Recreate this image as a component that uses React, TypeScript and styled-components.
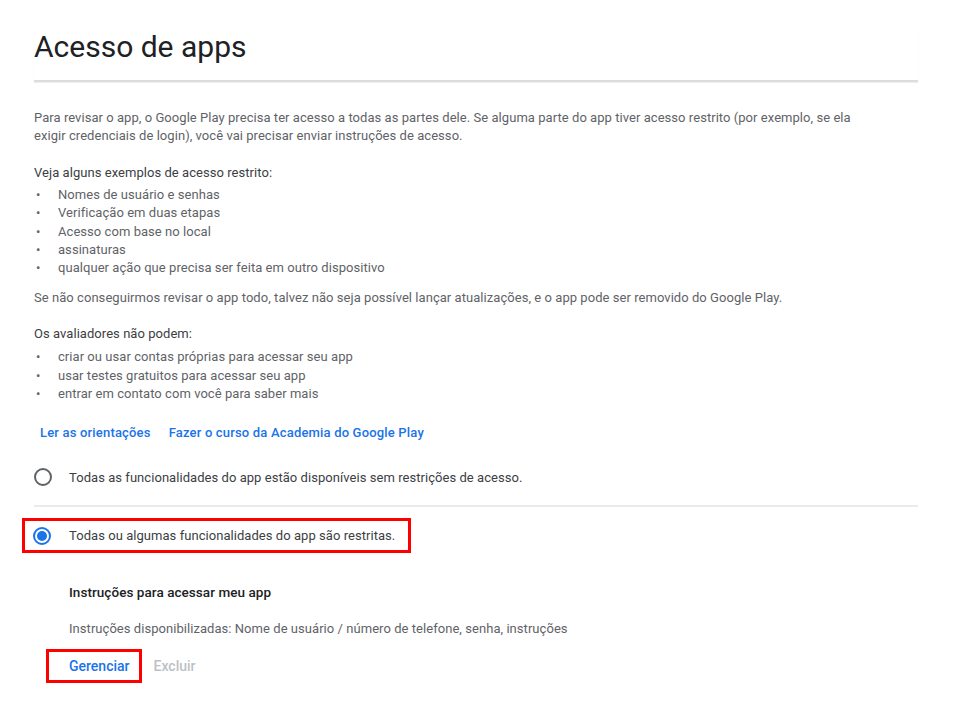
import React from "react";
import styled, { createGlobalStyle } from "styled-components";

const Global = createGlobalStyle`
  html, body { margin: 0; padding: 0; background: #fff; }
  body { font-family: Roboto, "Noto Sans", Arial, sans-serif; -webkit-font-smoothing: antialiased; }
`;

const Page = styled.div`
  width: 884px;
  padding: 28px 0 20px 34px;
  letter-spacing: 0.05px;
`;

const Title = styled.h1`
  margin: 0;
  font-size: 30px;
  line-height: 38px;
  font-weight: 400;
  letter-spacing: 0;
  color: #202124;
  padding-bottom: 14px;
  border-bottom: 2px solid #dadce0;
  box-shadow: 0 1px 1px rgba(0,0,0,0.06);
`;

const Para = styled.p<{ $dark?: boolean; $mt: number }>`
  max-width: 840px;
  margin: ${(p) => p.$mt}px 0 0;
  font-size: 13px;
  line-height: 18px;
  color: ${(p) => (p.$dark ? "#3c4043" : "#5f6368")};
`;

const List = styled.ul<{ $mt: number }>`
  list-style: none;
  margin: ${(p) => p.$mt}px 0 0;
  padding: 0;
`;

const Item = styled.li`
  position: relative;
  padding-left: 24px;
  font-size: 13px;
  line-height: 18.3px;
  color: #5f6368;
  &::before {
    content: "•";
    position: absolute;
    left: 2px;
    color: #5f6368;
    font-size: 13px;
  }
`;

const Links = styled.div`
  display: flex;
  gap: 6px;
  margin-top: 11px;
`;

const LinkButton = styled.a`
  display: inline-flex;
  align-items: center;
  height: 36px;
  padding: 0 6px;
  font-size: 13px;
  font-weight: 500;
  letter-spacing: 0.18px;
  color: #1a73e8;
  text-decoration: none;
  cursor: pointer;
`;

const RadioRow = styled.label<{ $flagged?: boolean }>`
  box-sizing: border-box;
  display: flex;
  align-items: center;
  gap: ${(p) => (p.$flagged ? "18px" : "17px")};
  font-size: 13px;
  color: #3c4043;
  height: ${(p) => (p.$flagged ? "35px" : "40px")};
  margin-left: ${(p) => (p.$flagged ? "-12px" : "0")};
  padding-left: ${(p) => (p.$flagged ? "8px" : "0")};
  width: ${(p) => (p.$flagged ? "389px" : "auto")};
  border: ${(p) => (p.$flagged ? "3px solid #ff0000" : "none")};
  cursor: pointer;
`;

const Radio = styled.span<{ $checked?: boolean }>`
  box-sizing: border-box;
  width: 18px;
  height: 18px;
  border-radius: 50%;
  border: 2px solid ${(p) => (p.$checked ? "#1a73e8" : "#5f6368")};
  display: flex;
  align-items: center;
  justify-content: center;
  flex: none;
  &::after {
    content: "";
    width: 10px;
    height: 10px;
    border-radius: 50%;
    background: ${(p) => (p.$checked ? "#1a73e8" : "transparent")};
  }
`;

const RadioGroup = styled.div`
  margin-top: 7px;
`;

const Divider = styled.div`
  height: 2px;
  background: #ebebeb;
  margin: 8px 0 11px;
`;

const Section = styled.div`
  padding-left: 35px;
  margin-top: 30px;
`;

const SectionTitle = styled.div`
  font-size: 13.5px;
  line-height: 18px;
  font-weight: 500;
  color: #202124;
`;

const SectionText = styled.div`
  margin-top: 19px;
  font-size: 13px;
  line-height: 18px;
  color: #5f6368;
`;

const Actions = styled.div`
  display: flex;
  align-items: center;
  margin-top: 11px;
  margin-left: -23px;
`;

const Action = styled.button<{ $disabled?: boolean; $flagged?: boolean }>`
  box-sizing: border-box;
  font-family: inherit;
  font-size: 14px;
  font-weight: 500;
  background: none;
  height: 34px;
  padding: ${(p) => (p.$flagged ? "0 9px 0 20px" : "0 0 0 12px")};
  border: ${(p) => (p.$flagged ? "3px solid #ff0000" : "none")};
  color: ${(p) => (p.$disabled ? "#bdc1c6" : "#1a73e8")};
  cursor: ${(p) => (p.$disabled ? "default" : "pointer")};
`;

export default function App() {
  return (
    <>
      <Global />
      <Page>
        <Title>Acesso de apps</Title>
        <Para $mt={27}>
          Para revisar o app, o Google Play precisa ter acesso a todas as partes dele. Se alguma parte do app tiver acesso restrito (por exemplo, se ela exigir credenciais de login), você vai precisar enviar instruções de acesso.
        </Para>
        <Para $dark $mt={19}>Veja alguns exemplos de acesso restrito:</Para>
        <List $mt={4}>
          <Item>Nomes de usuário e senhas</Item>
          <Item>Verificação em duas etapas</Item>
          <Item>Acesso com base no local</Item>
          <Item>assinaturas</Item>
          <Item>qualquer ação que precisa ser feita em outro dispositivo</Item>
        </List>
        <Para $mt={12}>
          Se não conseguirmos revisar o app todo, talvez não seja possível lançar atualizações, e o app pode ser removido do Google Play.
        </Para>
        <Para $dark $mt={18}>Os avaliadores não podem:</Para>
        <List $mt={5}>
          <Item>criar ou usar contas próprias para acessar seu app</Item>
          <Item>usar testes gratuitos para acessar seu app</Item>
          <Item>entrar em contato com você para saber mais</Item>
        </List>
        <Links>
          <LinkButton>Ler as orientações</LinkButton>
          <LinkButton>Fazer o curso da Academia do Google Play</LinkButton>
        </Links>
        <RadioGroup>
          <RadioRow>
            <Radio />
            Todas as funcionalidades do app estão disponíveis sem restrições de acesso.
          </RadioRow>
        </RadioGroup>
        <Divider />
        <RadioRow $flagged>
          <Radio $checked />
          Todas ou algumas funcionalidades do app são restritas.
        </RadioRow>
        <Section>
          <SectionTitle>Instruções para acessar meu app</SectionTitle>
          <SectionText>
            Instruções disponibilizadas: Nome de usuário / número de telefone, senha, instruções
          </SectionText>
          <Actions>
            <Action $flagged>Gerenciar</Action>
            <Action $disabled>Excluir</Action>
          </Actions>
        </Section>
      </Page>
    </>
  );
}
